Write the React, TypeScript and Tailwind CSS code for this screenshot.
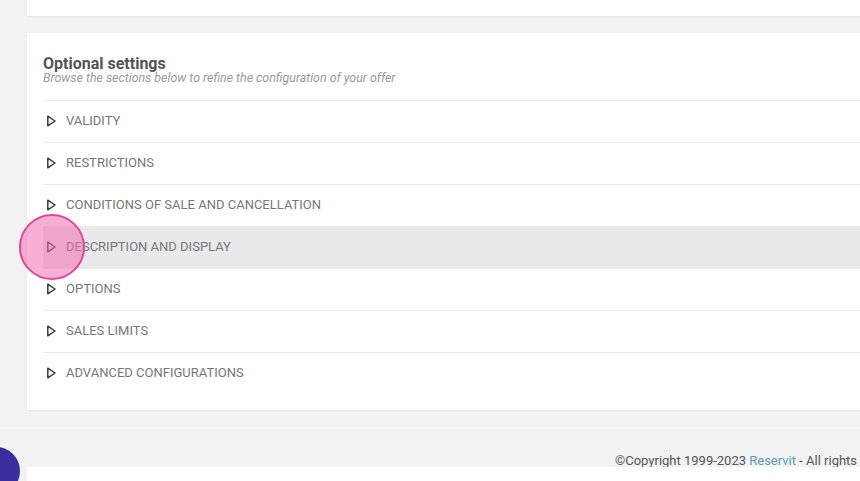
const sections = [
  "VALIDITY",
  "RESTRICTIONS",
  "CONDITIONS OF SALE AND CANCELLATION",
  "DESCRIPTION AND DISPLAY",
  "OPTIONS",
  "SALES LIMITS",
  "ADVANCED CONFIGURATIONS",
];

function Caret() {
  return (
    <svg width="10" height="12" viewBox="0 0 10 12" className="shrink-0">
      <path d="M1.8 1.2 L9 6 L1.8 10.8 Z" fill="none" stroke="#3a3a3a" strokeWidth="1.5" strokeLinejoin="round" />
    </svg>
  );
}

function SectionRow({ label, active }: { label: string; active?: boolean }) {
  return (
    <div className={`h-[42px] border-t border-[#ececec] flex items-center gap-[10px] pl-[3px] pb-[2px] ${active ? "bg-[#e9e9eb]" : ""}`}>
      <Caret />
      <span className="text-[13px] text-[#777777]">{label}</span>
    </div>
  );
}

export default function App() {
  return (
    <div className="relative w-[860px] h-[481px] overflow-hidden bg-[#f2f2f2] font-['Roboto',sans-serif]">
      <div className="w-[1000px]">
        {/* previous card, mostly scrolled away */}
        <div className="ml-[27px] h-[16px] bg-white shadow-[0_1px_2px_rgba(0,0,0,0.06)]" />

        <div className="ml-[27px] mt-[17px] h-[377px] bg-white shadow-[0_1px_2px_rgba(0,0,0,0.06)] px-[16px] pt-[22px]">
          <h2 className="text-[16px] leading-[17px] font-bold text-[#545454]">Optional settings</h2>
          <p className="text-[12.4px] leading-[12px] italic text-[#9a9a9a]">
            Browse the sections below to refine the configuration of your offer
          </p>
          <div className="mt-[16px]">
            {sections.map((s) => (
              <SectionRow key={s} label={s} active={s === "DESCRIPTION AND DISPLAY"} />
            ))}
          </div>
        </div>

        <footer className="mt-[17px] h-[40px] border-t border-[#f7f7f7] overflow-hidden pl-[615px] pt-[25px]">
          <p className="whitespace-nowrap text-[13px] leading-[15px] text-[#555555]">
            ©Copyright 1999-2023 <span className="text-[#5c9cb5]">Reservit</span> - All rights reserved
          </p>
        </footer>
        <div className="ml-[27px] h-[20px] bg-white" />
      </div>

      {/* click indicator */}
      <div className="absolute left-[19px] top-[214px] w-[66px] h-[66px] rounded-full border-2 border-[#e0479a] bg-[rgba(240,110,175,0.55)]" />
      {/* chat bubble */}
      <div className="absolute left-[-28px] top-[447px] w-[48px] h-[48px] rounded-full bg-[#3a2d9e]" />
    </div>
  );
}
